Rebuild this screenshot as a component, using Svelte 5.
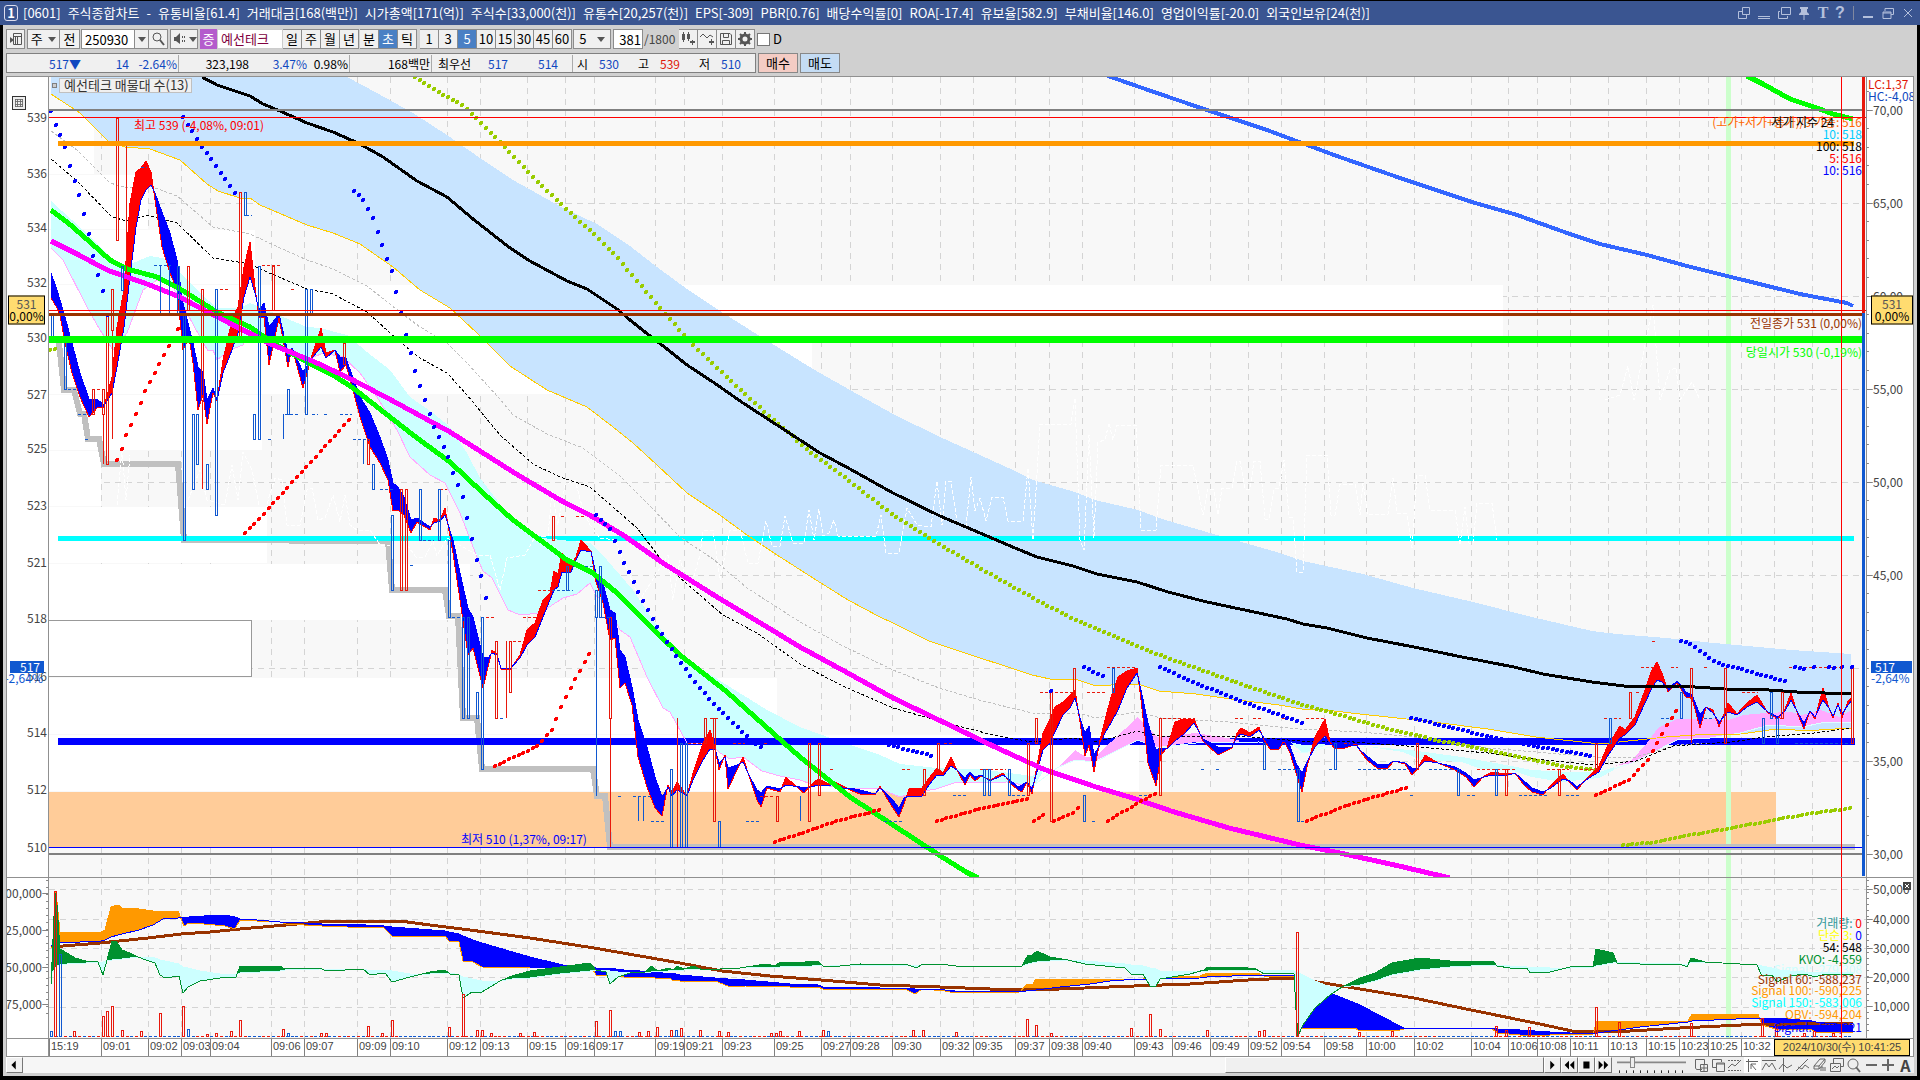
<script>
  const X0 = 49, W = 1817, TOP = 77, TOP_H = 800, LOW = 878, LOW_H = 160;
  const px = (x) => ((x - X0) / W) * 100;
  const pyTop = (y) => ((y - TOP) / TOP_H) * 100;
  const pyLow = (y) => ((y - LOW) / LOW_H) * 100;
  const parse = (s) => s.trim().split(/\s+/).map((p) => p.split(',').map(Number));

  const infoTitle = ['[0601]', '주식종합차트', '-', '유통비율[61.4]', '거래대금[168(백만)]', '시가총액[171(억)]', '주식수[33,000(천)]', '유통수[20,257(천)]', 'EPS[-309]', 'PBR[0.76]', '배당수익률[0]', 'ROA[-17.4]', '유보율[582.9]', '부채비율[146.0]', '영업이익률[-20.0]', '외국인보유[24(천)]'];
  const periods = ['일', '주', '월', '년'];
  const units = ['분', '초', '틱'];
  const steps = ['1', '3', '5', '10', '15', '30', '45', '60'];

  const times = [[49, '15:19'], [101, '09:01'], [148, '09:02'], [181, '09:03'], [210, '09:04'], [271, '09:06'], [304, '09:07'], [357, '09:09'], [390, '09:10'], [447, '09:12'], [480, '09:13'], [527, '09:15'], [565, '09:16'], [594, '09:17'], [655, '09:19'], [684, '09:21'], [722, '09:23'], [774, '09:25'], [821, '09:27'], [850, '09:28'], [892, '09:30'], [940, '09:32'], [973, '09:35'], [1015, '09:37'], [1049, '09:38'], [1082, '09:40'], [1134, '09:43'], [1172, '09:46'], [1210, '09:49'], [1248, '09:52'], [1281, '09:54'], [1324, '09:58'], [1366, '10:00'], [1414, '10:02'], [1471, '10:04'], [1508, '10:06'], [1537, '10:08'], [1570, '10:11'], [1608, '10:13'], [1646, '10:15'], [1679, '10:23'], [1708, '10:25'], [1741, '10:32'], [1774, ''], [1812, '']];
  const priceAxis = [[117, 539], [173, 536], [227, 534], [282, 532], [337, 530], [394, 527], [448, 525], [505, 523], [562, 521], [618, 518], [676, 516], [732, 514], [789, 512], [847, 510]];
  const scaleAxis = [[110, '70,00'], [203, '65,00'], [296, '60,00'], [389, '55,00'], [482, '50,00'], [575, '45,00'], [761, '35,00'], [854, '30,00']];
  const gridTop = [203, 296, 389, 482, 575, 668, 761];
  const gridLow = [889, 919, 948, 977, 1007];
  const lowLeft = [[893, '100,000'], [930, '125,000'], [967, '150,000'], [1004, '175,000']];
  const lowRight = [[889, '50,000'], [919, '40,000'], [948, '30,000'], [977, '20,000'], [1006, '10,000']];

  // volume-at-price bars: top, bottom, right edge
  const profile = [[118, 174, 94], [175, 229, 148], [230, 284, 255], [285, 339, 1503], [340, 394, 812], [395, 450, 262], [451, 506, 101], [507, 563, 267], [564, 620, 470], [678, 734, 777], [735, 791, 1139]];

  const bandTop = '51,77 347,77 377,93 413,113 447,135 480,158 513,180 563,208 597,224 630,246 657,267 687,289 720,311 758,335 813,369 850,390 893,414 940,437 980,455 1015,471 1033,480 1075,492 1095,500 1138,510 1162,519 1217,535 1280,553 1303,561 1363,574 1413,588 1473,602 1532,617 1592,631 1617,634 1666,638 1714,643 1791,650 1851,654 1852,728';
  const yellow = '51,94 80,113 108,141 125,147 150,149 180,160 207,184 218,191 240,198 250,198 260,205 307,225 333,233 360,244 393,267 420,290 450,308 477,333 510,366 547,390 587,407 613,427 633,443 657,465 687,493 717,513 747,535 777,555 813,578 848,600 880,617 893,623 929,641 971,655 1014,669 1032,675 1050,679 1075,679 1093,685 1111,685 1138,684 1159,691 1196,694 1238,700 1279,705 1302,709 1325,710 1360,714 1425,721 1488,729 1536,737 1600,744 1666,737 1695,735 1741,734 1769,730 1788,729 1802,731 1852,728';
  const bandFill = bandTop + ' ' + yellow.split(' ').reverse().join(' ');
  const black = '202,77 217,85 250,96 263,104 280,111 307,123 333,132 360,144 383,157 417,181 447,197 473,219 510,248 530,261 567,281 587,289 617,309 630,320 650,336 667,349 687,365 713,382 743,403 777,425 820,453 850,469 893,493 940,516 980,533 1015,548 1037,557 1073,566 1097,574 1137,582 1168,592 1207,602 1287,619 1303,624 1327,628 1367,638 1414,647 1462,657 1514,667 1543,674 1592,682 1632,687 1680,686 1725,689 1769,690 1797,692 1852,694';
  const grayDots = '51,131 77,150 110,183 127,188 150,186 177,196 213,227 250,234 267,242 307,260 333,269 367,286 400,312 420,327 447,343 467,363 499,398 513,415 547,434 583,448 620,476 647,503 680,537 713,559 747,588 800,622 843,646 893,670 939,688 979,700 1032,713 1082,714 1095,718 1138,712 1161,718 1229,722 1300,729 1360,732 1414,737 1488,748 1595,757 1636,757 1677,745 1710,743';
  const blackDots = '51,159 77,181 112,217 127,221 147,215 177,223 213,258 250,264 267,272 307,289 333,294 367,312 400,342 420,358 447,373 467,395 500,435 533,464 560,477 590,487 613,507 637,528 660,558 680,578 723,615 757,633 800,664 843,686 893,708 943,722 993,735 1032,742 1075,738 1093,742 1111,738 1138,731 1159,736 1239,736 1300,741 1340,741 1407,746 1488,753 1525,758 1595,765 1636,761 1673,746 1732,742 1765,737 1814,733 1852,728';
  const green = '51,210 67,222 90,242 110,260 127,269 157,277 180,289 217,312 250,327 273,343 307,362 333,375 353,388 390,417 417,438 450,462 483,493 513,520 540,540 567,560 593,573 617,593 637,613 657,633 680,655 727,692 783,742 800,757 850,797 893,825 939,855 966,872 978,878';
  const green2 = '1747,76 1763,84 1790,99 1817,108 1833,114 1853,119';
  const magenta = '51,241 77,254 107,270 147,284 180,297 200,308 233,325 273,345 317,363 353,380 393,401 450,432 513,472 560,500 593,517 623,535 663,563 717,597 767,627 800,647 846,672 893,698 943,722 993,746 1043,769 1096,787 1136,799 1171,811 1229,828 1300,845 1340,853 1399,866 1450,878';
  const royal = '1108,76 1151,91 1204,109 1267,130 1334,155 1400,178 1472,202 1517,215 1567,233 1600,244 1647,255 1687,266 1727,276 1800,294 1847,303 1853,306';
  const steps510 = '59,343 64,390 74,390 80,414 84,414 88,439 99,439 104,464 178,464 184,540 388,541 392,590 445,590 449,616 458,616 463,718 477,718 482,769 593,769 597,796 605,796 610,847 1855,847';
  const pinkLine = '51,248 63,260 87,307 100,330 113,350 127,333 143,290 157,280 173,287 187,313 200,337 208,351 213,350 217,360 230,350 243,345 253,327 283,347 307,360 323,353 343,357 360,373 377,397 397,430 410,457 430,475 445,483 460,513 477,557 483,571 492,578 508,610 520,615 540,613 563,598 577,594 590,583 597,597 607,602 613,617 620,630 630,637 647,677 663,708 670,712 687,743 710,743 720,753 730,759 743,757 762,771 780,776 800,780 811,784 846,788 880,789 900,797 918,792 936,789 954,783 1007,782 1034,787';
  const cyanTop = '51,201 83,230 110,257 122,266 133,263 150,256 173,260 180,273 200,293 217,308 240,308 250,303 267,310 283,317 307,327 320,328 347,335 367,352 390,370 410,397 433,413 450,427 467,453 480,478 507,513 533,537 590,543 607,560 633,590 653,620 677,650 700,668 730,687 767,710 800,727 836,740 880,755 900,764 936,768 979,769 1032,776 1045,768';
  const cyanFill = cyanTop + ' ' + pinkLine.split(' ').reverse().join(' ');
  const cyanFill2 = '1290,742 1303,745 1325,744 1325,746 1303,753';
  const cyanFill3 = '1347,745 1410,750 1462,757 1495,763 1532,770 1569,772 1599,772 1614,767 1614,770 1599,778 1562,782 1532,777 1510,770 1481,769 1462,762 1421,760 1403,752 1370,747';
  const pinkFill1 = '1057,768 1075,750 1086,757 1095,757 1111,742 1138,717 1157,737 1196,733 1239,740 1239,742 1196,742 1157,747 1138,740 1114,752 1095,761 1075,760';
  const pinkFill2 = '1614,766 1632,760 1647,743 1658,728 1677,719 1710,719 1728,720 1743,715 1765,713 1791,712 1802,715 1821,710 1839,717 1852,710 1852,722 1821,723 1802,727 1769,725 1740,733 1710,738 1677,740 1654,752 1632,763';
  const paleEdge = '1034,785 1057,768 1075,760 1095,762 1114,752 1138,740 1157,748 1196,743 1259,742 1303,753 1340,745';
  const paleEdge2 = '1614,769 1632,763 1654,752 1677,740 1710,738 1740,733 1769,725 1802,727 1821,723 1852,722';
  const white1 = '117,505 122,450 126,500 130,455 M188,500 200,470 207,500 225,505 232,465 238,500 243,452 252,470 262,520 275,478 282,480 287,525 300,525 307,490 312,488 318,520 325,518 333,495 340,522 345,495 350,525 357,530 370,530 380,545 390,545 M407,545 416,557 425,557 433,541 437,556 447,538 477,555 490,555 500,590 507,558 525,555 535,537 548,536 552,490 558,525 565,485 575,480 583,510 590,525 600,538 615,540 640,600 668,555 673,600 680,560 690,590 700,555 703,531 713,530 720,580 730,530 740,530 748,563 758,563 766,521 772,546 780,546 785,516 793,543 804,543 809,510 814,540 819,509 823,536 829,533 834,520 838,536 876,536 881,515 886,553 899,553 907,508 917,525 931,527 937,481 942,525 946,481 951,481 957,522 966,527 971,477 975,511 980,498 986,521 992,497 1003,497 1008,521 1023,521 1028,468 1033,540 1040,424 1071,424 1075,398 1080,540 1084,550 1089,435 1094,538 1098,442 1105,440 1109,423 1113,440 1117,425 1136,425 1141,530 1156,530 1161,465 1193,465 1203,515 1208,489 1214,490 1218,515 1222,488 1232,488 1237,461 1240,461 1245,489 1250,489 1254,461 1260,461 1265,519 1269,519 1274,489 1279,488 1284,460 1289,517 1293,518 1297,572 1303,572 1307,455 1327,455 1331,515 1335,515 1340,484 1355,484 1360,515 1363,483 1368,514 1388,514 1393,478 1397,513 1407,514 1412,548 1417,475 1425,475 1430,510 1455,510 1460,545 1465,507 1469,543 1473,543 1477,503 1492,503 1497,540 M1605,400 1620,395 1628,366 1634,400 1640,370 1653,305 1660,400 1670,370 1676,368 1680,400 1692,382 1700,400';

  // dotted stop-and-reverse trails, one dot for every bar
  const STEP = 4.72;
  function trail(s) {
    const p = parse(s), out = [];
    let i = 0;
    for (let x = p[0][0]; x <= p[p.length - 1][0] + 1; x += STEP) {
      while (i < p.length - 2 && x > p[i + 1][0]) i++;
      const [a, b] = [p[i], p[Math.min(i + 1, p.length - 1)]];
      out.push([Math.round(x), Math.round(a[1] + ((b[1] - a[1]) * (x - a[0])) / (b[0] - a[0] || 1))]);
    }
    return out;
  }
  const blueTrails = [
    '51,111 55,123 60,134 65,146 69,163 74,179 79,194 84,214 88,231 93,254 98,274 103,291 107,312',
    '183,117 188,125 193,132 202,147 212,160 221,173 235,193',
    '354,191 359,195 363,199 368,209 373,218 378,233 387,259 392,272 397,294 406,335 415,370 425,401 434,427 449,458 453,473 463,498 468,521 477,561 482,578 487,602',
    '596,515 600,519 610,529 615,541 624,562 638,591 652,618 662,634 676,656 695,682 714,704 733,723 747,736 762,748',
    '889,745 933,756', '1051,691 1052,691', '1084,667 1104,677', '1160,667 1193,682 1246,703 1302,723',
    '1411,718 1462,730 1495,738 1540,747 1592,756', '1681,641 1691,644 1714,661 1725,666 1738,668 1758,674 1785,681',
    '1795,667 1804,669', '1814,667 1815,667', '1829,667 1834,668', '1842,667 1843,667', '1852,667 1853,667'
  ].flatMap(trail);
  const redTrails = [
    '117,460 122,448 126,436 136,414 145,392 155,373 169,346 178,330', '245,533 259,519 349,420',
    '495,766 538,746 553,728 562,705 572,685 582,667 591,651', '775,842 800,834 836,821 880,810', '937,821 979,809 1029,798',
    '1034,821 1046,813 ', '1054,821 1074,812 1079,806', '1108,821 1136,804 1155,794', '1307,821 1340,808 1377,796 1407,788',
    '1596,795 1629,780 1648,760 1662,734 1667,725 1676,711'
  ].flatMap(trail);
  const oliveTrails = [
    '50,350 54,349',
    '415,77 433,89 463,105 496,138 505,147 533,177 563,206 595,235 615,255 637,281 662,310 693,345 733,383 770,417 813,454 852,483 893,515 937,543 973,564 1013,587 1050,607 1082,623 1154,653 1232,681 1300,704 1340,715 1388,729 1436,740 1503,753 1562,766 1595,770',
    '1623,845 1658,842 1684,836 1732,828 1784,818 1821,812 1852,808'
  ].flatMap(trail);

  // filled ribbon between two series; the colour depends on which one is higher
  function ribbon(s) {
    const p = parse(s);
    let up = '', down = '';
    const quad = (x1, a1, b1, x2, a2, b2) => `M${x1},${a1}L${x2},${a2}L${x2},${b2}L${x1},${b1}Z`;
    for (let i = 0; i < p.length - 1; i++) {
      const [x1, a1, b1] = p[i], [x2, a2, b2] = p[i + 1];
      const d1 = a1 - b1, d2 = a2 - b2;
      if (d1 * d2 < 0) {
        const t = d1 / (d1 - d2), x = x1 + (x2 - x1) * t, y = a1 + (a2 - a1) * t;
        const first = quad(x1, a1, b1, x, y, y), second = quad(x, y, y, x2, a2, b2);
        if (d1 > 0) { up += first; down += second; } else { down += first; up += second; }
      } else if (d1 + d2 >= 0) up += quad(x1, a1, b1, x2, a2, b2);
      else down += quad(x1, a1, b1, x2, a2, b2);
    }
    return { up, down, slow: p.map((q) => q[0] + ',' + q[1]).join(' '), fast: p.map((q) => q[0] + ',' + q[2]).join(' ') };
  }
  const price = ribbon(`51,273,298 57,290,308 60,300,315 65,317,343 72,343,373 80,373,397 89,399,417 98,400,407 104,405,407 112,393,377 117,367,327 124,327,290 130,277,203 136,227,172 141,200,168 146,190,161 151,185,172 155,193,200 162,212,247 170,233,273 177,260,290 183,303,350 189,327,337 193,343,363 198,367,410 203,372,395 207,400,424 213,388,393 217,400,401 223,373,360 232,350,320 238,333,307 244,297,267 250,277,242 255,293,287 259,310,317 264,303,317 269,327,365 279,314,318 288,353,367 292,348,348 303,372,388 313,357,352 321,347,328 326,358,353 335,350,350 340,357,372 346,358,365 353,378,390 360,397,417 370,413,447 380,437,463 388,460,480 393,483,511 398,487,510 404,497,515 411,520,533 417,518,522 430,527,530 434,523,518 440,521,520 445,515,508 453,540,553 460,573,600 468,608,655 473,617,648 483,657,688 489,657,663 492,653,650 497,655,654 501,668,669 510,669,670 520,658,655 527,645,630 535,637,623 543,617,600 550,600,593 554,590,571 558,587,574 562,572,553 571,572,565 576,560,557 581,550,540 591,552,551 596,573,582 603,583,603 610,610,640 615,613,638 620,650,688 625,657,683 632,687,705 638,720,757 647,747,787 655,777,808 662,797,816 668,787,785 672,796,792 677,790,782 687,796,796 693,780,773 703,760,743 710,749,730 715,749,747 719,763,770 725,757,755 728,768,789 737,765,770 743,762,757 750,777,779 757,790,800 761,793,807 767,786,788 780,789,792 786,785,777 800,787,790 804,787,793 811,787,785 818,785,779 829,786,784 835,783,782 843,788,786 850,788,790 860,790,794 875,794,795 880,788,786 886,793,797 893,800,808 899,808,817 904,798,804 909,796,789 922,796,788 929,785,778 937,775,768 943,776,773 951,766,757 957,770,770 965,778,785 970,772,775 975,777,781 981,775,776 990,781,780 1003,775,773 1010,780,783 1018,787,790 1022,785,792 1027,782,782 1032,789,794 1038,768,760 1043,750,733 1050,743,719 1055,732,707 1063,715,702 1070,708,695 1075,698,690 1080,718,722 1085,733,756 1089,726,745 1094,755,772 1100,745,740 1105,733,720 1111,723,697 1118,710,677 1127,688,671 1137,673,668 1141,690,700 1148,723,763 1156,750,786 1161,748,755 1167,749,748 1175,741,722 1183,735,719 1194,723,719 1203,739,741 1218,747,755 1232,747,748 1237,737,733 1241,734,728 1250,737,733 1259,730,727 1264,738,740 1270,743,749 1279,742,749 1284,741,741 1290,746,753 1296,763,773 1302,773,792 1307,762,767 1315,747,737 1325,736,719 1330,744,742 1334,744,748 1345,746,748 1356,745,744 1361,751,752 1367,756,760 1377,764,768 1387,765,769 1394,761,761 1405,763,764 1412,768,775 1418,768,768 1425,761,755 1438,763,763 1455,767,770 1466,773,777 1474,780,787 1484,777,776 1492,775,772 1505,776,774 1515,773,773 1523,780,784 1532,788,792 1543,792,795 1551,788,785 1563,779,774 1570,781,783 1577,787,790 1589,778,776 1599,772,766 1607,757,747 1620,738,726 1625,735,730 1635,725,717 1645,703,690 1651,690,672 1657,680,662 1662,682,673 1668,689,692 1677,681,683 1686,692,697 1692,695,698 1700,715,728 1706,707,707 1713,713,710 1719,722,727 1728,712,703 1737,715,714 1747,707,703 1757,702,695 1768,712,713 1778,717,719 1785,711,709 1791,700,693 1798,713,715 1804,723,729 1810,711,711 1815,717,719 1823,700,688 1829,708,708 1833,716,718 1838,705,703 1842,714,718 1848,705,701 1852,700,697`);
  const obv = ribbon(`51,946,948 54,945,945 56,944,892 60,943,932 101,941,932 105,940,930 111,937,907 118,935,905 122,934,908 139,930,909 153,925,911 163,919,911 178,918,911 184,917,926 189,917,923 204,916,924 225,915,926 235,917,929 240,919,920 257,920,921 280,922,922 286,922,924 322,924,926 347,924,927 384,926,928 392,927,936 445,931,936 449,932,941 459,934,942 463,936,961 473,940,962 482,943,967 530,957,968 563,965,968 592,967,968 596,968,975 616,969,975 624,970,977 640,971,977 655,972,978 670,974,978 672,973,980 680,975,981 715,978,981 728,979,986 745,980,986 790,984,987 818,985,987 823,987,989 880,988,989 907,988,990 915,989,994 922,989,989 945,990,991 955,991,993 1020,992,992 1026,991,985 1033,990,984 1036,990,979 1060,987,979 1090,984,979 1110,981,979 1138,979,980 1160,979,976 1200,978,976 1207,977,973 1258,975,973 1264,975,976 1280,975,976 1296,976,976 1297,977,1020 1299,979,1028 1312,984,1028 1330,993,1028 1355,1003,1028 1358,1004,1030 1400,1026,1030 1404,1028,1029 1412,1028,1028 1430,1028,1028 1492,1028,1029 1498,1029,1033 1520,1030,1035 1550,1032,1035 1570,1033,1034 1593,1034,1034 1597,1033,1021 1640,1027,1021 1688,1022,1021 1692,1021,1014 1758,1018,1014 1762,1018,1025 1776,1018,1029 1812,1021,1030 1816,1022,1032 1853,1026,1032`);
  const kvo = ribbon(`51,975,985 55,968,893 57,966,905 60,965,949 67,964,953 75,963,958 86,963,961 98,962,962 101,962,970 103,962,975 107,961,960 112,960,941 116,959,941 122,959,950 130,958,953 138,957,957 146,957,960 155,958,963 160,960,975 165,961,978 179,964,976 183,967,993 188,968,987 200,971,981 220,974,978 236,974,977 240,973,966 280,971,966 285,970,969 320,969,968 326,969,971 345,970,970 363,969,969 370,971,975 385,970,973 392,971,982 410,974,977 430,974,972 445,973,970 450,973,974 459,975,975 463,977,998 472,979,992 482,981,992 500,981,981 512,979,976 530,978,971 560,974,967 590,971,963 596,970,970 606,970,972 610,971,984 618,972,977 630,972,973 640,972,972 645,972,972 651,972,966 658,971,971 668,971,968 674,970,970 677,970,966 684,970,969 693,969,966 703,969,970 720,969,969 740,968,968 766,967,964 775,967,966 780,967,962 805,966,962 812,966,961 818,965,961 823,966,966 830,966,967 860,965,964 908,965,965 917,965,968 922,965,964 940,964,964 956,966,966 1022,966,966 1028,964,955 1032,963,955 1037,962,951 1050,961,957 1068,960,960 1085,961,964 1125,964,968 1131,965,974 1143,966,974 1150,968,986 1156,969,986 1160,971,979 1190,972,974 1204,971,970 1208,971,967 1240,970,967 1256,970,969 1264,970,974 1280,970,973 1294,971,974 1296,972,1010 1298,973,1036 1303,975,1025 1315,981,1008 1330,987,995 1342,987,987 1360,985,978 1375,981,973 1392,975,963 1420,970,958 1450,967,961 1493,965,961 1497,965,966 1510,966,968 1527,967,968 1530,967,973 1550,968,972 1570,968,967 1590,967,966 1593,967,967 1596,966,949 1613,963,953 1617,962,963 1640,963,964 1680,964,964 1687,965,967 1691,962,958 1705,962,962 1757,965,965 1762,966,976 1772,968,975 1777,970,982 1790,971,976 1805,972,974 1815,972,977 1825,972,974 1853,973,974`);
  const brownLow = '51,947 100,943 148,938 181,934 210,932 240,929 286,925 330,921 400,921 430,925 470,930 530,938 594,948 640,956 680,963 722,971 770,976 821,980 880,985 940,987 1015,990 1060,989 1134,986 1190,984 1248,980 1290,978 1324,983 1366,990 1414,998 1471,1010 1540,1024 1572,1031 1630,1031 1680,1028 1741,1025 1853,1023';

  // candle bodies: x, top, bottom
  const redBodies = parse('117,118,240 112,289,330 107,313,464 103,389,414 93,389,414 188,266,310 202,289,400 240,192,337 273,266,310 344,343,364 368,439,464 401,489,590 406,489,590 553,516,540 496,641,718 510,641,692 610,617,718 705,718,743 714,718,821 777,796,821 809,743,821 819,743,795 924,769,795 938,743,769 1028,743,795 1036,718,743 1051,692,821 1074,668,695 1160,718,795 1417,743,769 1506,769,795 1559,769,795 1596,743,769 1630,692,718 1691,668,698 1725,668,743 1782,692,718 1852,668,743');
  const redWicks = parse('126,142,273 112,330,439 103,414,464 202,400,489 506,641,718 610,718,847 677,718,847 1691,698,743');
  const blueBodies = parse('52,313,340 65,337,389 122,266,290 178,266,313 184,315,540 193,414,489 197,414,464 207,464,489 216,289,515 245,192,215 254,414,439 259,266,439 288,389,414 306,289,414 311,289,313 373,464,489 392,515,590 420,489,540 439,489,540 449,540,617 463,617,718 468,617,718 477,692,718 482,617,769 567,566,590 596,590,617 600,566,617 671,769,847 681,743,847 686,743,847 719,821,847 984,769,795 989,769,795 1009,769,795 1084,795,821 1113,668,692 1264,743,769 1298,769,821 1335,743,769 1458,769,795 1496,769,795 1610,718,743 1681,692,718 1763,718,743 1771,692,718 1777,718,743');
  const blueWicks = parse('160,266,313 169,266,313 283,414,439 363,439,464 596,617,796 638,796,821 643,796,821 800,796,821');
  const redTicks = parse('128,138,142 220,229,289 262,282,265 291,294,289 97,107,389 440,447,489 486,494,617 523,537,617 513,522,641 538,551,590 561,565,516 576,584,516 688,702,743 710,720,718 733,745,743 764,768,743 760,775,796 830,834,769 902,911,769 944,953,743 980,1006,769 1040,1074,692 1087,1105,692 1107,1137,667 1163,1195,718 1235,1243,718 1253,1261,718 1282,1286,718 1306,1324,718 1344,1350,743 1477,1517,769 1547,1569,769 1580,1595,769 1604,1621,718 1641,1656,667 1671,1678,667 1704,1708,667 1636,1640,692 1652,1655,641 1742,1758,692 1770,1782,718 1789,1842,667');
  const blueTicks = parse('141,147,167 246,252,215 154,171,265 68,77,389 78,89,414 85,90,439 268,272,439 285,298,414 312,318,414 324,328,414 340,352,414 353,367,439 380,395,489 423,434,540 410,414,565 452,460,617 500,504,718 552,573,590 585,595,566 602,612,617 618,621,796 633,650,796 651,666,821 746,760,821 884,902,821 953,968,795 1012,1026,795 1032,1036,821 1092,1096,821 1139,1154,795 1201,1205,769 1216,1220,769 1278,1296,769 1301,1306,821 1329,1333,769 1358,1408,769 1410,1414,795 1429,1455,769 1467,1475,795 1519,1547,795 1566,1579,795 1661,1675,718 1704,1712,718 1795,1851,743');

  const redVol = parse('55,891 74,1031 103,1016 107,1011 112,1006 122,1030 141,1031 160,1013 183,1006 207,1034 216,1033 231,1031 240,1020 283,1029 321,1033 326,1033 368,1026 382,1033 392,1020 449,1027 463,994 477,1030 482,1030 491,1033 520,1033 534,1032 596,1021 610,1010 639,1032 648,1031 657,1027 671,1030 681,1028 700,1030 719,1031 728,1032 771,1033 776,1033 780,1031 799,1031 823,1030 913,1030 923,1030 956,1032 1027,1019 1036,1025 1051,1033 1131,1028 1150,1014 1160,1029 1207,1030 1259,1031 1264,1030 1297,932 1359,1032 1392,1031 1496,1026 1506,1030 1529,1027 1596,1007 1619,1022 1691,1023 1762,1018 1776,1026 1804,1033 1814,1031 1833,1033');
  const blueVol = parse('51,1031 60,954 188,1029 288,1033 615,1031 620,1031 676,1030 828,1031');
  const volDashes = Array.from({ length: 382 }, (_, i) => ({ x: 51 + i * 4.72, red: (i * 7 + ((i * i) % 11)) % 5 < 2 }));

  const topLabels = [
    { y: 122, c: 'orange', t: '(고가+저가+종가)/3 가중: 516' },
    { y: 134, c: 'sky', t: '10: 518' },
    { y: 146, c: 'ink', t: '100: 518' },
    { y: 158, c: 'red', t: '5: 516' },
    { y: 170, c: 'blue', t: '10: 516' }
  ];
  const lowLabels = [
    { y: 923, c: 'teal', t: '거래량:', v: '0', vc: 'red' },
    { y: 935, c: 'yellow', t: '단순 3:', v: '0', vc: 'blue' },
    { y: 947, c: 'ink', t: '54:', v: '548', vc: 'ink' },
    { y: 959, c: 'green', t: 'KVO:', v: '-4,559', vc: 'green' },
    { y: 969, c: 'pale', t: 'Signal:', v: '-279,308', vc: 'pale' },
    { y: 979, c: 'brown', t: 'Signal 60:', v: '-588,237', vc: 'brown' },
    { y: 990, c: 'amber', t: 'Signal 100:', v: '-590,225', vc: 'amber' },
    { y: 1002, c: 'cyan', t: 'Signal 150:', v: '-583,006', vc: 'cyan' },
    { y: 1014, c: 'amber', t: 'OBV:', v: '-594,204', vc: 'amber' },
    { y: 1027, c: 'blue', t: 'Signal:', v: '-590,321', vc: 'blue' }
  ];
</script>

<div class="window">
  <header class="title">
    <span class="badge">1</span>
    <h1>{#each infoTitle as part}<span>{part}</span>{/each}</h1>
    <div class="controls">
      <button aria-label="창 배치"><svg viewBox="0 0 14 14"><path d="M6 5.5H1.500V12.500H9.500V9M5.500 1.500H12.500V8.500H5.500Z" /></svg></button>
      <button aria-label="내리기"><svg viewBox="0 0 14 14"><path d="M1 10.500H13M1 12.500H13" /></svg></button>
      <button aria-label="복제"><svg viewBox="0 0 14 14"><path d="M4.500 1.500H13.500V8.500H4.500ZM3 5.500H1.500V12.500H10.500V10" /></svg></button>
      <button aria-label="고정"><svg viewBox="0 0 14 14"><path class="solid" d="M3 1H11V3H10V6L12 8V9H2V8L4 6V3H3ZM6.500 9H7.500V14H6.500Z" /></svg></button>
      <button class="glyph serif">T</button>
      <button class="glyph">?</button>
      <i></i>
      <button class="wide" aria-label="최소화"><svg viewBox="0 0 14 14"><path class="solid" d="M2 10H12V12H2Z" /></svg></button>
      <button class="wide" aria-label="이전 크기"><svg viewBox="0 0 14 14"><path d="M4 5V2.500H12.500V8.500H10M2 6H10V12.500H2ZM2 7H10" /></svg></button>
      <button aria-label="닫기"><svg viewBox="0 0 14 14"><path d="M3 3L11 11M11 3L3 11" /></svg></button>
    </div>
  </header>

  <main>
    <div class="toolbar">
      <button class="w19 gap2" aria-label="패널"><svg viewBox="0 0 16 16"><path d="M5.500 2.500H13.500V13.500H5.500ZM5.500 5.500H13.500M9.500 5.500V13.500M7.500 5.500V13.500" /><path class="solid" d="M2 6L6 9L2 12Z" /></svg></button>
      <button class="w33 drop"><span>주</span><b></b></button>
      <button class="w20">전</button>
      <input class="code" aria-label="종목코드" value="250930" />
      <button class="w14" aria-label="종목 목록"><b></b></button>
      <button class="w19 gap2" aria-label="검색"><svg viewBox="0 0 16 16"><circle cx="7" cy="6" r="4" /><path d="M10 9L14 14" stroke-width="2" /></svg></button>
      <button class="w28 drop gap2" aria-label="소리"><svg viewBox="0 0 16 16"><path class="solid" d="M2 6H4L8 2V13L4 10H2ZM10 5H11V7H10ZM10 9H11V11H10ZM12 5H13V7H12ZM12 9H13V11H12Z" /></svg><b></b></button>
      <span class="mark">증</span>
      <span class="stock">예선테크</span>
      {#each periods as p}<button class="w19">{p}</button>{/each}
      <span class="gap1"></span>
      {#each units as u}<button class="w19" class:on={u === '초'}>{u}</button>{/each}
      <span class="gap3"></span>
      {#each steps as s}<button class="w19" class:on={s === '5'}>{s}</button>{/each}
      <button class="w38 drop lead"><span>5</span><b></b></button>
      <input class="count" aria-label="표시 개수" value="381" />
      <span class="total">/1800</span>
      <button class="w19" aria-label="차트 추가"><svg viewBox="0 0 16 16"><path class="solid" d="M2 3H5V9H2ZM3 1H4V11H3ZM7 3H10V8H7ZM8 1H9V10H8ZM11 10H12V9H13V10H15V12H13V14H12V12H10V10Z" /></svg></button>
      <button class="w19" aria-label="지표 추가"><svg viewBox="0 0 16 16"><path d="M1 6L4 3L8 7L11 4L14 6" /><path class="solid" d="M10 10H12V8H13V10H15V12H13V14H12V12H10Z" /></svg></button>
      <button class="w19" aria-label="저장"><svg viewBox="0 0 16 16"><path d="M2.500 2.500H12L13.500 4V13.500H2.500ZM5.500 2.500V6.500H10.500V2.500M4.500 13V9.500H11.500V13" /></svg></button>
      <button class="w19" aria-label="설정"><svg viewBox="0 0 16 16"><circle cx="8" cy="8" r="4" stroke-width="3" /><path d="M8 1V4M8 12V15M1 8H4M12 8H15M3 3L5 5M11 11L13 13M13 3L11 5M5 11L3 13" stroke-width="2" /></svg></button>
      <label class="check"><input type="checkbox" />D</label>
    </div>

    <div class="quotes">
      <div class="quote">
        <span class="q1 up">517▼</span><span class="q2 up">14</span><span class="q3 up cut">-2.64%</span>
        <span class="q4">323,198</span><span class="q5 up">3.47%</span><span class="q6 cut">0.98%</span>
        <span class="q7 cut">168백만</span><span class="q8">최우선</span><span class="q9 up">517</span><span class="q10 up cut">514</span>
        <span class="q11">시</span><span class="q12 up">530</span><span class="q13">고</span><span class="q12 hot">539</span><span class="q13">저</span><span class="q12 up">510</span>
      </div>
      <button class="buy">매수</button>
      <button class="sell">매도</button>
    </div>

    <section class="charts">
      <div class="axis left">
        <button class="gridbtn" aria-label="데이터 보기"><svg viewBox="0 0 14 14"><path d="M2.500 2.500H11.500V11.500H2.500ZM2.500 5.500H11.500M2.500 8.500H11.500M5.500 2.500V11.500M8.500 2.500V11.500" /></svg></button>
        {#each priceAxis as [y, t]}<span class="lab" style:top="{pyTop(y)}%">{t}</span>{/each}
        <span class="pct" style:top="{pyTop(678)}%">-2,64%</span>
        <span class="now" style:top="{pyTop(667)}%">517</span>
        <span class="tag" style:top="{pyTop(310)}%"><em>531</em>0,00%</span>
      </div>

      <div class="plot">
        <svg viewBox="49 77 1817 800" preserveAspectRatio="none">
          <g class="grid">
            {#each gridTop as y}<path d="M49 {y + 0.5}H1862" />{/each}
            {#each times.slice(1) as [x]}<path d="M{x + 0.5} 77V877" />{/each}
          </g>
          {#each profile as [a, b, r]}<rect x="49" y={a} width={r - 49} height={b - a} fill="#fff" />{/each}
          <rect x="49" y="792" width="1727" height="55" fill="#fc9" />
          <rect x="48.5" y="620.5" width="203" height="56" fill="#fff" stroke="#999" />
          <rect x="1726" y="77" width="5" height="800" fill="#cfc" />
          <polygon points={bandFill} fill="#c8e4ff" />
          <polyline points={steps510} stroke="#c0c0c0" stroke-width="6" />
          <path d="M58 538.500H1854" stroke="#0ff" stroke-width="5" />
          <polygon points={cyanFill} fill="#cff" />
          <path d="M58 741.500H1855" stroke="#00f" stroke-width="7" />
          <polygon points={cyanFill2} fill="#cff" />
          <polygon points={cyanFill3} fill="#cff" />
          <polygon points={pinkFill1} fill="#faf" />
          <polygon points={pinkFill2} fill="#faf" />
          <polyline points={paleEdge} stroke="#dff" />
          <polyline points={paleEdge2} stroke="#dff" />
          <polyline points={pinkLine} stroke="#faf" />
          <polyline points={yellow} stroke="#fc0" />
          <path d="M{white1}" stroke="#fff" stroke-dasharray="4 2" />
          <polyline points={grayDots} stroke="#c0c0c0" stroke-dasharray="3 2" />
          <polyline points={blackDots} stroke="#000" stroke-dasharray="3 2" />
          {#each oliveTrails as [x, y]}<circle cx={x} cy={y} r="2" fill="#9c0" />{/each}
          <path d={price.up} fill="#f00" />
          <path d={price.down} fill="#00f" />
          <polyline points={price.fast} stroke="#f00" />
          <polyline points={price.slow} stroke="#00f" />
          <polyline points={black} stroke="#000" stroke-width="3" />
          <polyline points={green} stroke="#0f0" stroke-width="5" />
          <polyline points={green2} stroke="#0f0" stroke-width="5" />
          <polyline points={magenta} stroke="#f0f" stroke-width="5" />
          <polyline points={royal} stroke="#36f" stroke-width="4" />
          <g class="cr">
            {#each redBodies as [x, a, b]}<rect x={x - 0.5} y={a + 0.5} width="2" height={b - a} />{/each}
            {#each redWicks as [x, a, b]}<path d="M{x + 0.5} {a}V{b}" />{/each}
            {#each redTicks as [a, b, y]}<path d="M{a} {y + 0.5}H{b}" stroke-dasharray="3 2" />{/each}
          </g>
          <g class="cb">
            {#each blueBodies as [x, a, b]}<rect x={x - 0.5} y={a + 0.5} width="2" height={b - a} />{/each}
            {#each blueWicks as [x, a, b]}<path d="M{x + 0.5} {a}V{b}" />{/each}
            {#each blueTicks as [a, b, y]}<path d="M{a} {y + 0.5}H{b}" stroke-dasharray="3 2" />{/each}
          </g>
          {#each blueTrails as [x, y]}<circle cx={x} cy={y} r="2" fill="#00f" />{/each}
          {#each redTrails as [x, y]}<circle cx={x} cy={y} r="2" fill="#f00" />{/each}
          <path d="M49 110H1862M49 854H1862" stroke="#808080" stroke-width="2" />
          <path d="M49 117.500H1866M49 310.500H1866" stroke="#f00" />
          <path d="M58 143.500H1854" stroke="#f90" stroke-width="5" />
          <path d="M49 314.500H1862" stroke="#930" stroke-width="3" />
          <path d="M49 339.500H1862" stroke="#0f0" stroke-width="7" />
          <path d="M49 847.500H1862" stroke="#00f" />
          <path d="M1841.500 77V877" stroke="#f00" />
          <path d="M1863.500 77V313" stroke="#e8180c" stroke-width="3" />
          <path d="M1863.500 313V876" stroke="#1058d0" stroke-width="3" />
        </svg>
        <span class="legend">예선테크 매물대 수(13)</span>
        <span class="note red" style:left="{px(134)}%" style:top="{pyTop(125)}%">최고 539 (-4,08%, 09:01)</span>
        <span class="note blue" style:left="{px(461)}%" style:top="{pyTop(839)}%">최저 510 (1,37%, 09:17)</span>
        {#each topLabels as l}<span class="side {l.c}" style:top="{pyTop(l.y)}%">{l.t}</span>{/each}
        <span class="side ink over" style:top="{pyTop(122)}%">저가 지수 24</span>
        <span class="side brown" style:top="{pyTop(323)}%">전일종가 531 (0,00%)</span>
        <span class="side lime" style:top="{pyTop(352)}%">당일시가 530 (-0,19%)</span>
      </div>

      <div class="axis right">
        <svg viewBox="0 77 48 800" preserveAspectRatio="none">
          {#each { length: 42 } as _, i}<path d="M0 {Math.round(91 + i * 18.6)}.5H2" stroke="#808080" />{/each}
          {#each scaleAxis as [y]}<path d="M0 {y + 0.5}H6" stroke="#808080" />{/each}
        </svg>
        <span class="lc hot" style:top="{pyTop(84)}%">LC:1,37</span>
        <span class="lc up" style:top="{pyTop(96)}%">HC:-4,08</span>
        {#each scaleAxis as [y, t]}<span class="lab" style:top="{pyTop(y)}%">{t}</span>{/each}
        <span class="pct" style:top="{pyTop(678)}%">-2,64%</span>
        <span class="now" style:top="{pyTop(667)}%">517</span>
        <span class="tag" style:top="{pyTop(310)}%"><em>531</em>0,00%</span>
      </div>

      <div class="axis left">
        {#each lowLeft as [y, t]}<span class="lab far" style:top="{pyLow(y)}%">{t}</span>{/each}
        <svg viewBox="0 878 43 160" preserveAspectRatio="none">
          {#each lowLeft as [y]}<path d="M37 {y + 0.5}H43" stroke="#808080" />{/each}
          {#each { length: 20 } as _, i}<path d="M41 {880 + i * 7}.5H43" stroke="#808080" />{/each}
        </svg>
      </div>
      <div class="plot">
        <svg viewBox="49 878 1817 160" preserveAspectRatio="none">
          <g class="grid">
            {#each gridLow as y}<path d="M49 {y + 0.5}H1866" />{/each}
            {#each times.slice(1) as [x]}<path d="M{x + 0.5} 878V1038" />{/each}
          </g>
          <rect x="1726" y="878" width="5" height="160" fill="#cfc" />
          {#each volDashes as d}<rect x={Math.round(d.x - 1)} y="1036" width="3" height="1" fill={d.red ? '#e8180c' : '#1058d0'} />{/each}
          <path d={obv.up} fill="#f90" />
          <path d={obv.down} fill="#00f" />
          <polyline points={brownLow} stroke="#930" stroke-width="3" />
          <polyline points={obv.fast} stroke="#f90" />
          <polyline points={obv.slow} stroke="#00f" />
          <path d={kvo.up} fill="#00912f" />
          <path d={kvo.down} fill="#cff" />
          <polyline points={kvo.slow} stroke="#cff" />
          <polyline points={kvo.fast} stroke="#00912f" />
          <g class="cr">{#each redVol as [x, y]}<rect x={x - 0.5} y={y + 0.5} width="2" height={1036 - y} />{/each}</g>
          <g class="cb">{#each blueVol as [x, y]}<rect x={x - 0.5} y={y + 0.5} width="2" height={1036 - y} />{/each}</g>
        </svg>
        {#each lowLabels as l}<span class="side {l.c}" style:top="{pyLow(l.y)}%">{l.t} <span class={l.vc}>{l.v}</span></span>{/each}
        <svg viewBox="49 878 1817 160" preserveAspectRatio="none"><path d="M1841.500 878V1038" stroke="#f00" /></svg>
      </div>
      <div class="axis right">
        <svg viewBox="0 878 48 160" preserveAspectRatio="none">
          {#each lowRight as [y]}<path d="M0 {y + 0.5}H6" stroke="#808080" />{/each}
          {#each { length: 26 } as _, i}<path d="M0 {880 + i * 6}.5H2" stroke="#808080" />{/each}
        </svg>
        {#each lowRight as [y, t]}<span class="lab" style:top="{pyLow(y)}%">{t}</span>{/each}
        <button class="shut" aria-label="지표 닫기"><svg viewBox="0 0 8 8"><path d="M2 2L6 6M6 2L2 6" /></svg></button>
      </div>

      <div class="corner"></div>
      <div class="timeline">
        {#each times as [x, t]}<span style:left="{px(x)}%">{t}</span>{/each}
        <time>2024/10/30(수) 10:41:25</time>
      </div>
      <div class="corner"></div>
    </section>

    <footer>
      <button class="key" aria-label="왼쪽으로"><svg viewBox="0 0 16 16"><path class="fill" d="M10 3V13L5 8Z" /></svg></button>
      <div class="track"><div class="thumb"></div></div>
      <button class="key" aria-label="재생"><svg viewBox="0 0 16 16"><path class="fill" d="M6 3V13L11 8Z" /></svg></button>
      <button class="key" aria-label="되감기"><svg viewBox="0 0 16 16"><path class="fill" d="M8 3V13L3 8ZM14 3V13L9 8Z" /></svg></button>
      <button class="key" aria-label="정지"><svg viewBox="0 0 16 16"><path class="fill" d="M5 4H12V12H5Z" /></svg></button>
      <button class="key" aria-label="빨리 감기"><svg viewBox="0 0 16 16"><path class="fill" d="M3 3V13L8 8ZM9 3V13L14 8Z" /></svg></button>
      <div class="speed">
        <svg viewBox="0 0 72 18" preserveAspectRatio="none"><path d="M2 6H71" stroke="#888" stroke-width="2" />{#each { length: 10 } as _, i}<path d="M{4 + i * 7}.5 15V18" stroke="#222" />{/each}</svg>
        <input type="range" aria-label="재생 속도" min="0" max="9" value="2" />
      </div>
      <div class="tools">
        <button aria-label="추가 창"><svg viewBox="0 0 16 16"><path d="M9 12.500H3.500L2.500 11V2.500H11.500V7M7.500 7.500H14.500V14.500H7.500ZM7.500 11H14.500M11 7.500V14.500" /></svg></button>
        <button aria-label="겹치기"><svg viewBox="0 0 16 16"><path d="M6 10.500H2.500V2.500H11.500V5M6.500 6H14.500V14.500H6.500ZM6.500 7H14.500" /></svg></button>
        <button aria-label="선 도구"><svg viewBox="0 0 16 16"><path stroke-dasharray="2 1" d="M1 3.500H14M1 13.500H14" /><path d="M1 11L5 7L8 9L13 4" /></svg></button>
        <button class="pressed" aria-label="십자선"><svg viewBox="0 0 16 16"><path d="M2 4.500H14M4.500 2V15M12 7L7 7L12 13M7 7V12" /></svg></button>
        <button aria-label="수평선"><svg viewBox="0 0 16 16"><path d="M1 3.500H15M1 13L5 6L8 10L11 6L15 13" /></svg></button>
        <button aria-label="수직선"><svg viewBox="0 0 16 16"><path d="M5.500 1V15M1 12L5 7L9 11L14 8" /></svg></button>
        <button aria-label="추세선"><svg viewBox="0 0 16 16"><path d="M1 14L13 2M3 10L7 12L10 8L14 11" /></svg></button>
        <button aria-label="모두 지우기"><svg viewBox="0 0 16 16"><path d="M2 9L8 2H13L7 9ZM2 9V12H7V9M7 12L13 5V2M9 14V10H11V14M13 10V14" /></svg></button>
        <button aria-label="배경"><svg viewBox="0 0 16 16"><path d="M4.500 6V1.500H14.500V9.500H12M1.500 6.500H11.500V14.500H1.500ZM3 12L6 9L8 11L10 9" /></svg></button>
        <button aria-label="확대경"><svg viewBox="0 0 16 16"><circle cx="7" cy="7" r="5" /><path d="M10 10L14 15" stroke-width="2" /></svg></button>
        <button aria-label="축소"><svg viewBox="0 0 16 16"><path d="M3 8H14" stroke-width="2" /></svg></button>
        <button aria-label="확대"><svg viewBox="0 0 16 16"><path d="M2 8H14M8 2V14" stroke-width="2" /></svg></button>
        <button class="glyph">A</button>
      </div>
    </footer>
  </main>
</div>

<style>
  :global(body) { margin: 0; background: #000; }
  .window, .window :where(button, input) { font-family: 'Noto Sans CJK KR', 'Liberation Sans', sans-serif; font-size: 13px; line-height: 12px; }
  .window { box-sizing: border-box; min-height: 100vh; display: flex; flex-direction: column; border-top: 1px solid #000; border-bottom: 4px solid #000; color: #000; }
  .window :where(div, button, input, section, span) { box-sizing: border-box; }
  button { padding: 0; margin: 0; border: 0; background: none; color: inherit; }
  svg { display: block; fill: none; }
  .title { display: flex; align-items: center; height: 24px; padding: 0 4px; background: #3a5591; color: #fff; }
  .badge { width: 14px; height: 16px; border: 1px solid #dde; border-radius: 3px; font-weight: bold; text-align: center; line-height: 14px; }
  h1 { flex: 1; display: flex; gap: 7px; margin: 0 0 0 5px; font-size: 13px; font-weight: normal; line-height: 22px; white-space: nowrap; }
  .controls { display: flex; align-items: center; gap: 5px; color: #b4c0dc; }
  .controls button { width: 15px; height: 16px; }
  .controls .glyph { width: 12px; }
  .controls svg { width: 14px; height: 14px; stroke: #b4c0dc; }
  .controls .solid { fill: #b4c0dc; stroke: none; }
  .controls .glyph { font-size: 16px; font-weight: bold; font-family: 'Liberation Sans', sans-serif; }
  .controls .serif { font-family: 'Liberation Serif', serif; }
  .controls i { width: 1px; height: 14px; margin: 0 2px; background: #8088a0; }
  main { flex: 1; display: flex; flex-direction: column; padding: 0 3px 3px; border: solid #000; border-width: 0 3px; background: #d0d0d0; }

  .toolbar { display: flex; align-items: center; height: 28px; flex: none; }
  .toolbar > button { height: 20px; border: 1px solid #8c8c8c; border-left-width: 0; background: #f0f0f0; display: flex; align-items: center; justify-content: center; }
  .toolbar > button:first-child, .toolbar .drop { border-left-width: 1px; }
  .toolbar svg { width: 16px; height: 16px; stroke: #555; }
  .toolbar .solid { fill: #555; stroke: none; }
  .toolbar b { border: 4px solid transparent; border-top: 5px solid #555; border-bottom: 0; }
  .toolbar .drop { justify-content: space-around; }
  .toolbar .on { background: #4a80c4; color: #fff; }
  .w14 { width: 14px; } .w19 { width: 19px; } .w20 { width: 20px; } .w28 { width: 28px; } .w33 { width: 33px; } .w38 { width: 38px; }
  .gap2 { margin-right: 2px; } .gap1 { width: 1px; } .gap3 { width: 3px; } .lead { margin-left: 1px; }
  .toolbar > input { height: 20px; border: 1px solid #8c8c8c; background: #fff; padding: 0 3px; }
  .toolbar > .code { width: 54px; margin-left: 1px; }
  .toolbar > .count { width: 30px; margin: 0 1px 0 2px; text-align: right; padding: 0 1px; }
  .total { width: 35px; color: #444; font-size: 12px; }
  .mark { width: 17px; height: 20px; background: #b45ccc; color: #fff; line-height: 19px; text-align: center; }
  .stock { width: 66px; height: 20px; padding-left: 3px; border: 1px solid #ccc; background: #fff; color: #800040; line-height: 17px; }
  .check { display: flex; align-items: center; gap: 3px; margin-left: 2px; }
  .check input { appearance: none; width: 13px; height: 13px; margin: 0; border: 1px solid #777; background: #fff; }

  .quotes { display: flex; height: 23px; gap: 2px; flex: none; font-size: 12px; }
  .quote { display: flex; align-items: center; height: 20px; width: 750px; border: 1px solid #808080; background: #f0f0f0; }
  .quote span { line-height: 17px; text-align: right; white-space: nowrap; }
  .quote .cut { border-right: 1px solid #aaa; padding-right: 1px; }
  .q1 { width: 74px; } .q2 { width: 48px; } .q3 { width: 50px; } .q4 { width: 70px; } .q5 { width: 58px; } .q6 { width: 43px; } .q7 { width: 82px; } .q8 { width: 39px; } .q9 { width: 37px; } .q10 { width: 65px; } .q11 { width: 15px; } .q12 { width: 31px; } .q13 { width: 30px; }
  .quote .q10 { padding-right: 14px; }
  .up { color: #1048c0; } .hot { color: #e01808; }
  .quotes button { width: 40px; height: 20px; border: 1px solid #888; }
  .quotes .buy { background: #f4ccc4; } .quotes .sell { background: #c4dcf4; }

  .charts { flex: 1; display: grid; grid-template-columns: 43px minmax(0, 1fr) 48px; grid-template-rows: 801fr 161fr 18px; font-size: 12px; }
  .charts > div { position: relative; border-top: 1px solid #909090; }
  .charts > .axis { background: #fff; overflow: hidden; color: #444; }
  .left { border-left: 1px solid #909090; border-right: 1px solid #909090; }
  .right { border-left: 1px solid #909090; border-right: 1px solid #909090; }
  .axis svg, .plot svg { position: absolute; inset: 0; width: 100%; height: 100%; shape-rendering: crispEdges; }
  .plot { background: #f8f8f8; overflow: hidden; }
  .grid { stroke: #d4d4d4; stroke-dasharray: 6 5; }
  .cr { stroke: #e8180c; } .cb { stroke: #1058d0; }
  .axis span, .note, .side, .legend { position: absolute; white-space: nowrap; }
  .side span { position: static; }
  .lab, .lc, .pct, .now, .tag, .note, .side { transform: translateY(-50%); }
  .left .lab { right: 1px; } .left .far { right: 6px; }
  .right .lab { left: 6px; }
  .lc { left: 1px; }
  .pct { color: #1058d0; } .left .pct { right: 5px; } .right .pct { left: 4px; }
  .now { background: #1058d0; color: #fff; height: 12px; padding: 0 4px; }
  .left .now { left: 3px; width: 34px; text-align: right; } .right .now { left: 4px; width: 41px; }
  .tag { border: 1px solid #000; background: #ffdc70; color: #000; height: 29px; padding: 1px 0; text-align: center; }
  .tag em { display: block; font-style: normal; color: #555; }
  .left .tag { left: 1px; width: 37px; } .right .tag { left: 4px; width: 42px; }
  .gridbtn { position: absolute; left: 5px; top: 19px; width: 14px; height: 14px; border: 1px solid #333; background: #eee; }
  .gridbtn svg { position: static; stroke: #666; }
  .legend { left: 10px; top: 1px; height: 15px; padding: 0 2px 0 4px; border: 1px solid #c0c0c0; background: #f0f0f0; color: #333; font-size: 13px; line-height: 12px; }
  .legend::before { content: ''; position: absolute; left: -8px; top: 4px; width: 3px; height: 3px; border: 1px solid #808080; background: #ccc; }
  .side { right: 4px; } .over { right: 32px; }
  .red { color: #f00; } .blue { color: #00f; } .orange { color: #f60; } .sky { color: #0cf; } .ink { color: #000; } .brown { color: #930; } .lime { color: #0f0; }
  .teal { color: #399; } .yellow { color: #ff0; } .green { color: #00912f; } .pale { color: #cff; } .amber { color: #f90; } .cyan { color: #0ff; }
  .shut { position: absolute; right: 2px; top: 4px; width: 8px; height: 8px; background: #444; }
  .shut svg { position: static; stroke: #fff; }
  .corner, .timeline { background: #fff; }
  .corner { border: 1px solid #909090; border-width: 0 1px; }
  .timeline { font-family: 'Liberation Sans', 'Noto Sans CJK KR', sans-serif; font-size: 11px; }
  .timeline span { position: absolute; top: 0; bottom: 0; padding-left: 1px; border-left: 1px solid #808080; color: #444; line-height: 15px; }
  .timeline time { position: absolute; z-index: 1; left: calc(100% - 92px); top: 0; width: 136px; height: 17px; box-sizing: border-box; border: 1px solid #000; background: #ffdc70; color: #444; line-height: 14px; text-align: center; white-space: nowrap; }

  footer { display: flex; align-items: center; flex: none; height: 17px; border-top: 1px solid #909090; box-sizing: border-box; background: #eee; }
  .key { width: 17px; height: 16px; border: 1px solid; border-color: #fff #777 #777 #fff; background: #f0f0f0; }
  .key svg { width: 14px; height: 14px; }
  .fill { fill: #000; }
  .track { flex: 1; height: 16px; background: #f6f6f6; }
  .thumb { width: 21%; height: 16px; margin-left: auto; border: 1px solid; border-color: #fff #777 #777 #fff; background: #f0f0f0; }
  .speed { position: relative; width: 72px; height: 16px; margin: 0 6px 0 3px; }
  .speed svg { position: absolute; inset: 0; width: 100%; height: 100%; }
  .speed input { position: relative; appearance: none; width: 100%; height: 11px; margin: 0; display: block; background: none; }
  .speed input::-webkit-slider-thumb { appearance: none; width: 5px; height: 11px; border: 1px solid #888; background: #eee; }
  .tools { display: flex; }
  .tools button { width: 17px; height: 16px; }
  .tools svg { width: 16px; height: 16px; stroke: #666; }
  .tools .pressed { background: #fff; }
  .tools .glyph { font-weight: bold; font-size: 16px; color: #444; line-height: 15px; }
</style>
